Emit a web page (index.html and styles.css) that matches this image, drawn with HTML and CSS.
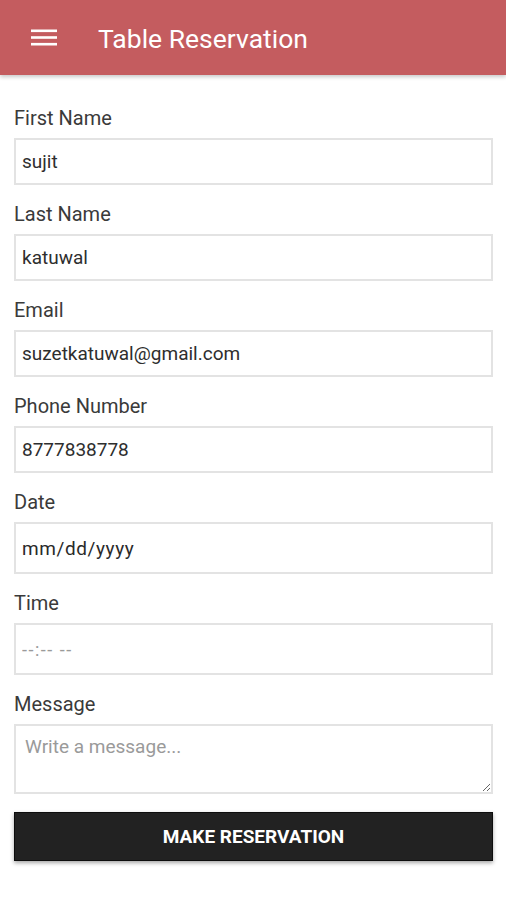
FILE: index.html
```html
<!DOCTYPE html>
<html lang="en">
<head>
<meta charset="utf-8">
<title>Table Reservation</title>
<link rel="stylesheet" href="styles.css">
</head>
<body>
<header class="appbar">
  <svg class="menu" width="26" height="17" viewBox="0 0 26 17" aria-hidden="true">
    <rect x="0" y="0.5" width="26" height="2.6" fill="#fff"/>
    <rect x="0" y="7.2" width="26" height="2.6" fill="#fff"/>
    <rect x="0" y="13.9" width="26" height="2.6" fill="#fff"/>
  </svg>
  <h1 class="title">Table Reservation</h1>
</header>
<main class="form">
  <div class="field">
    <label class="label" for="fn">First Name</label>
    <input class="input" id="fn" type="text" value="sujit">
  </div>
  <div class="field">
    <label class="label" for="ln">Last Name</label>
    <input class="input" id="ln" type="text" value="katuwal">
  </div>
  <div class="field">
    <label class="label" for="em">Email</label>
    <input class="input" id="em" type="text" value="suzetkatuwal@gmail.com">
  </div>
  <div class="field">
    <label class="label" for="ph">Phone Number</label>
    <input class="input" id="ph" type="text" value="8777838778">
  </div>
  <div class="field">
    <label class="label" for="dt">Date</label>
    <input class="input input-tall input-date" id="dt" type="text" value="mm/dd/yyyy">
  </div>
  <div class="field">
    <label class="label" for="tm">Time</label>
    <input class="input input-tall input-time" id="tm" type="text" placeholder="--:-- --">
  </div>
  <div class="field">
    <label class="label" for="ms">Message</label>
    <textarea class="textarea" id="ms" placeholder="Write a message..."></textarea>
  </div>
  <button class="submit" type="button">MAKE RESERVATION</button>
</main>
</body>
</html>
```

FILE: styles.css
```css
html, body {
  margin: 0;
  padding: 0;
  background: #ffffff;
  font-family: Roboto, "Noto Sans", "Liberation Sans", sans-serif;
}

.appbar {
  height: 75px;
  background: #c45c5f;
  display: flex;
  align-items: center;
  padding-left: 31px;
  box-shadow: 0 2px 4px rgba(0, 0, 0, 0.22);
  position: relative;
  z-index: 1;
}

.menu {
  display: block;
  flex: none;
}

.title {
  margin: 2px 0 0 41px;
  font-size: 26.5px;
  font-weight: 400;
  color: #ffffff;
  line-height: 30px;
}

.form {
  padding: 32px 13px 20px 14px;
}

.field {
  margin-bottom: 18px;
}

.label {
  display: block;
  font-size: 20px;
  line-height: 22px;
  color: #3a3a3a;
  margin-bottom: 9px;
}

.input,
.textarea {
  display: block;
  width: 100%;
  box-sizing: border-box;
  border: 2px solid #e3e3e3;
  border-radius: 0;
  background: #ffffff;
  font-family: Roboto, "Noto Sans", "Liberation Sans", sans-serif;
  font-size: 19px;
  color: #2e2e2e;
  padding: 0 6px;
  margin: 0;
  outline: none;
}

.input {
  height: 47px;
}

.input-tall {
  height: 52px;
}

.input-date {
  letter-spacing: 0.6px;
  color: #2a2a2a;
}

.input-time::placeholder {
  color: #9a9a9a;
  font-size: 18px;
  letter-spacing: 1.5px;
}

.textarea {
  height: 70px;
  padding: 10px 9px;
  resize: vertical;
  font-size: 19px;
  line-height: 22px;
}

.textarea::placeholder {
  color: #9a9a9a;
}

.submit {
  display: block;
  width: 100%;
  height: 49px;
  margin-top: 1px;
  background: #222222;
  border: 1px solid #0d0d0d;
  color: #ffffff;
  font-family: Roboto, "Noto Sans", "Liberation Sans", sans-serif;
  font-weight: 700;
  font-size: 19px;
  letter-spacing: 0;
  box-shadow: 0 2px 4px rgba(0, 0, 0, 0.35);
  cursor: pointer;
}
```
